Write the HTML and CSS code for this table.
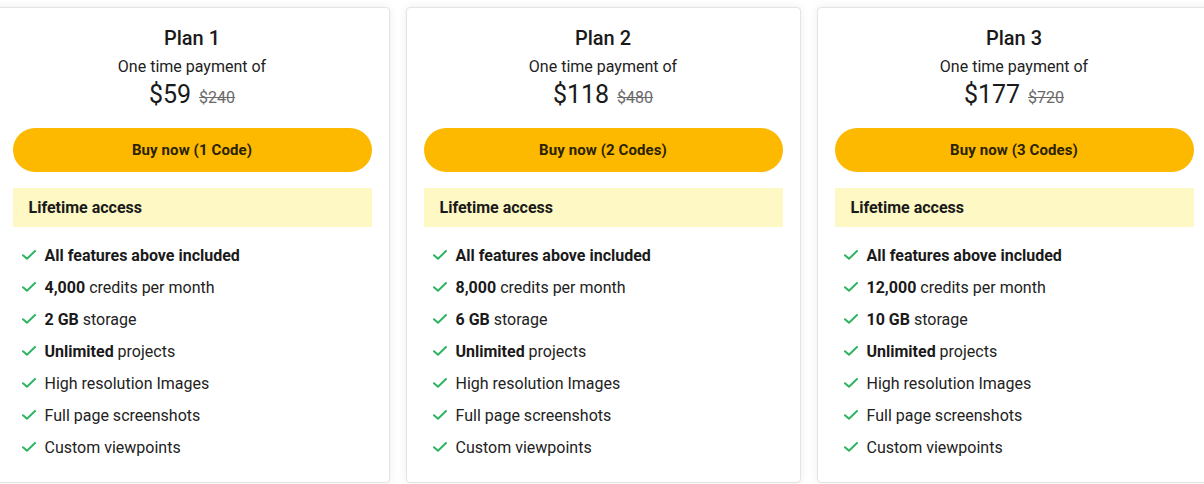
FILE: index.html
```html
<!DOCTYPE html>
<html>
<head>
<meta charset="utf-8">
<link rel="stylesheet" href="styles.css">
</head>
<body>
<div class="plans">
  <div class="card">
    <div class="title">Plan 1</div>
    <div class="sub">One time payment of</div>
    <div class="price"><span class="now">$59</span><span class="old">$240</span></div>
    <button class="buy">Buy now (1 Code)</button>
    <div class="life">Lifetime access</div>
    <ul class="feats">
      <li><svg viewBox="0 0 14 10"><path d="M1 5.2l4 3.6L13 1"/></svg><span><b>All features above included</b></span></li>
      <li><svg viewBox="0 0 14 10"><path d="M1 5.2l4 3.6L13 1"/></svg><span><b>4,000</b> credits per month</span></li>
      <li><svg viewBox="0 0 14 10"><path d="M1 5.2l4 3.6L13 1"/></svg><span><b>2 GB</b> storage</span></li>
      <li><svg viewBox="0 0 14 10"><path d="M1 5.2l4 3.6L13 1"/></svg><span><b>Unlimited</b> projects</span></li>
      <li><svg viewBox="0 0 14 10"><path d="M1 5.2l4 3.6L13 1"/></svg><span>High resolution Images</span></li>
      <li><svg viewBox="0 0 14 10"><path d="M1 5.2l4 3.6L13 1"/></svg><span>Full page screenshots</span></li>
      <li><svg viewBox="0 0 14 10"><path d="M1 5.2l4 3.6L13 1"/></svg><span>Custom viewpoints</span></li>
    </ul>
  </div>
  <div class="card">
    <div class="title">Plan 2</div>
    <div class="sub">One time payment of</div>
    <div class="price"><span class="now">$118</span><span class="old">$480</span></div>
    <button class="buy">Buy now (2 Codes)</button>
    <div class="life">Lifetime access</div>
    <ul class="feats">
      <li><svg viewBox="0 0 14 10"><path d="M1 5.2l4 3.6L13 1"/></svg><span><b>All features above included</b></span></li>
      <li><svg viewBox="0 0 14 10"><path d="M1 5.2l4 3.6L13 1"/></svg><span><b>8,000</b> credits per month</span></li>
      <li><svg viewBox="0 0 14 10"><path d="M1 5.2l4 3.6L13 1"/></svg><span><b>6 GB</b> storage</span></li>
      <li><svg viewBox="0 0 14 10"><path d="M1 5.2l4 3.6L13 1"/></svg><span><b>Unlimited</b> projects</span></li>
      <li><svg viewBox="0 0 14 10"><path d="M1 5.2l4 3.6L13 1"/></svg><span>High resolution Images</span></li>
      <li><svg viewBox="0 0 14 10"><path d="M1 5.2l4 3.6L13 1"/></svg><span>Full page screenshots</span></li>
      <li><svg viewBox="0 0 14 10"><path d="M1 5.2l4 3.6L13 1"/></svg><span>Custom viewpoints</span></li>
    </ul>
  </div>
  <div class="card">
    <div class="title">Plan 3</div>
    <div class="sub">One time payment of</div>
    <div class="price"><span class="now">$177</span><span class="old">$720</span></div>
    <button class="buy">Buy now (3 Codes)</button>
    <div class="life">Lifetime access</div>
    <ul class="feats">
      <li><svg viewBox="0 0 14 10"><path d="M1 5.2l4 3.6L13 1"/></svg><span><b>All features above included</b></span></li>
      <li><svg viewBox="0 0 14 10"><path d="M1 5.2l4 3.6L13 1"/></svg><span><b>12,000</b> credits per month</span></li>
      <li><svg viewBox="0 0 14 10"><path d="M1 5.2l4 3.6L13 1"/></svg><span><b>10 GB</b> storage</span></li>
      <li><svg viewBox="0 0 14 10"><path d="M1 5.2l4 3.6L13 1"/></svg><span><b>Unlimited</b> projects</span></li>
      <li><svg viewBox="0 0 14 10"><path d="M1 5.2l4 3.6L13 1"/></svg><span>High resolution Images</span></li>
      <li><svg viewBox="0 0 14 10"><path d="M1 5.2l4 3.6L13 1"/></svg><span>Full page screenshots</span></li>
      <li><svg viewBox="0 0 14 10"><path d="M1 5.2l4 3.6L13 1"/></svg><span>Custom viewpoints</span></li>
    </ul>
  </div>
</div>
</body>
</html>
```

FILE: styles.css
```css
html, body {
  margin: 0;
  padding: 0;
  background: #ffffff;
  overflow: hidden;
}
body {
  font-family: Roboto, "Liberation Sans", sans-serif;
  color: #1c1c1c;
  width: 1204px;
  height: 484px;
}
.plans {
  display: flex;
  justify-content: center;
  gap: 16px;
  padding-top: 7px;
  padding-left: 1px;
  width: 1204px;
}
.card {
  flex: 0 0 395px;
  box-sizing: border-box;
  width: 395px;
  height: 476px;
  background: #fff;
  border: 1px solid #e4e4e4;
  border-radius: 4px;
  box-shadow: 0 0 10px rgba(0, 0, 0, 0.07);
  padding: 19px 17px 19px;
  display: flex;
  flex-direction: column;
  align-items: stretch;
}
.title {
  text-align: center;
  font-size: 20px;
  line-height: 22px;
  font-weight: 500;
  color: #1a1a1a;
}
.sub {
  text-align: center;
  font-size: 16px;
  line-height: 20px;
  margin-top: 8px;
  color: #222;
}
.price {
  display: flex;
  justify-content: center;
  align-items: baseline;
  gap: 8px;
  margin-top: 3px;
  height: 30px;
  line-height: 30px;
}
.now {
  font-size: 25px;
  font-weight: 400;
  color: #1a1a1a;
}
.old {
  font-size: 16px;
  line-height: 30px;
  color: #6b6b6b;
  text-decoration: line-through;
}
.buy {
  margin-top: 18px;
  height: 44px;
  border: none;
  border-radius: 22px;
  background: #fdb900;
  font-family: Roboto, "Liberation Sans", sans-serif;
  font-size: 15px;
  font-weight: 700;
  color: #2a2200;
  letter-spacing: 0.1px;
  padding: 0;
}
.life {
  margin-top: 16px;
  height: 39px;
  background: #fef8c4;
  display: flex;
  align-items: center;
  padding-left: 16px;
  font-size: 16px;
  font-weight: 700;
  color: #1a1a1a;
}
.feats {
  list-style: none;
  margin: 12px 0 0;
  padding: 0 0 0 9px;
}
.feats li {
  display: flex;
  align-items: center;
  height: 32px;
  font-size: 16px;
  color: #222;
}
.feats li b {
  font-weight: 700;
  color: #1a1a1a;
}
.feats svg {
  width: 14px;
  height: 10px;
  margin-right: 9px;
  flex: 0 0 14px;
  fill: none;
  stroke: #2fb463;
  stroke-width: 2;
  stroke-linecap: round;
  stroke-linejoin: round;
}
```
